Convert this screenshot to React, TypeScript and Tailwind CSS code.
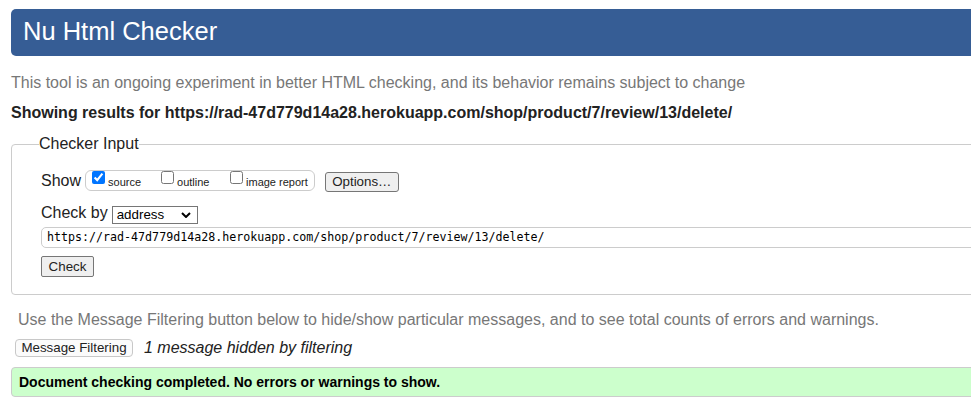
const url = "https://rad-47d779d14a28.herokuapp.com/shop/product/7/review/13/delete/";

function Box({ label, checked, width }: { label: string; checked?: boolean; width?: string }) {
  return (
    <label className={`flex items-start ${width ?? ""}`}>
      <input type="checkbox" defaultChecked={checked} className="m-0 h-[13px] w-[13px] accent-[#0075ff]" />
      <span className="ml-[3px] mt-[5px] text-[11px] leading-[13px]">{label}</span>
    </label>
  );
}

export default function App() {
  return (
    <div className="h-[405px] w-[971px] overflow-hidden bg-white text-[16px] text-[#222] [font-family:'Liberation_Sans',Arial,sans-serif]">
      <div className="w-[1200px] pl-[11px] pt-[9px]">
        <h1 className="flex h-[47px] items-center rounded-l-[5px] bg-[#365d95] pb-[2px] pl-[12px] text-[25.5px] font-normal text-white">
          Nu Html Checker
        </h1>
        <p className="mt-[17px] leading-[20px] text-[#777]">
          This tool is an ongoing experiment in better HTML checking, and its behavior remains subject to change
        </p>
        <p className="mt-[10px] font-bold leading-[20px]">Showing results for {url}</p>

        <fieldset className="mt-[11px] rounded-[4px] border border-[#ccc] pb-[17px] pl-[29px] pt-[16px]">
          <legend className="-ml-[2px] px-0 leading-[20px]">Checker Input</legend>

          <div className="flex items-start">
            <span className="mt-[1px] leading-[20px]">Show</span>
            <div className="ml-[4px] flex h-[21px] items-start rounded-[6px] border border-[#ccc] pl-[6px] pr-[6px]">
              <Box label="source" checked width="w-[69px]" />
              <Box label="outline" width="w-[69px]" />
              <Box label="image report" />
            </div>
            <button className="ml-[10px] mt-[2px] h-[20px] w-[74px] rounded-[3px] border border-[#767676] bg-[#efefef] text-[13.33px] leading-[18px]">
              Options…
            </button>
          </div>

          <div className="mt-[11px] flex items-start">
            <span className="leading-[20px]">Check by</span>
            <div className="ml-[4px] mt-[3px] flex h-[18px] w-[86px] items-center justify-between border border-[#767676] bg-white pl-[4px] pr-[6px] text-[13.33px] leading-[16px] text-black">
              <span>address</span>
              <svg width="10" height="6" viewBox="0 0 10 6" fill="none">
                <path d="M1 1 L5 5 L9 1" stroke="#000" strokeWidth="2" />
              </svg>
            </div>
          </div>

          <div className="mt-[3px] flex h-[21px] w-[1120px] items-center rounded-[5px] border border-[#ccc] pl-[5px] text-[11.65px] text-black [font-family:'DejaVu_Sans_Mono',monospace]">
            {url}
          </div>

          <button className="mt-[8px] block h-[21px] w-[53px] rounded-[2px] border border-[#767676] bg-[#efefef] text-[13.33px] leading-[19px]">
            Check
          </button>
        </fieldset>

        <p className="mt-[15px] pl-[7px] leading-[20px] text-[#777]">
          Use the Message Filtering button below to hide/show particular messages, and to see total counts of errors and warnings.
        </p>
        <div className="mt-[8px] flex items-center">
          <button className="ml-[4px] h-[18px] w-[118px] rounded-[4px] border border-[#c8c8c8] bg-[#fbfbfb] text-[13.33px] leading-[16px]">
            Message Filtering
          </button>
          <span className="ml-[11px] italic leading-[20px]">1 message hidden by filtering</span>
        </div>

        <div className="mt-[9px] flex h-[30px] items-center rounded-l-[4px] border border-[#ccc] bg-[#ccffcc] pl-[7px] text-[14px] font-bold text-black">
          Document checking completed. No errors or warnings to show.
        </div>
      </div>
    </div>
  );
}
